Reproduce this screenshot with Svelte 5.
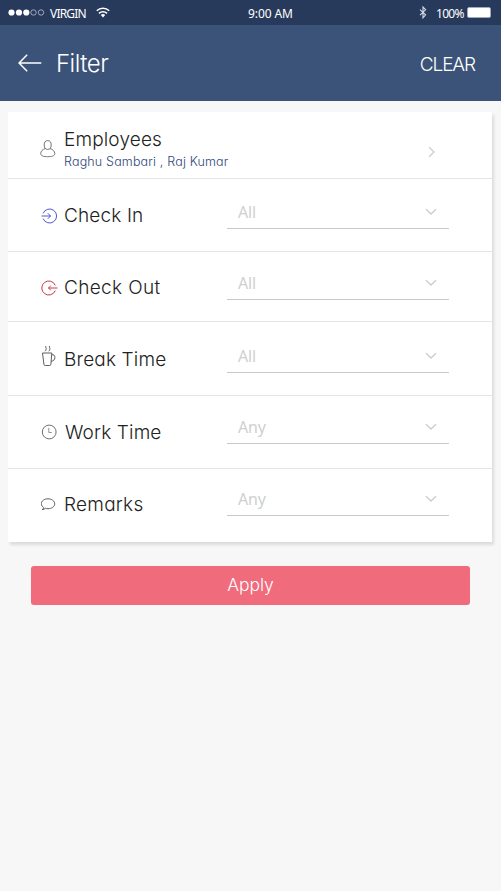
<script lang="ts">
  const filters = [
    { id: 'check-in', label: 'Check In', value: 'All' },
    { id: 'check-out', label: 'Check Out', value: 'All' },
    { id: 'break-time', label: 'Break Time', value: 'All' },
    { id: 'work-time', label: 'Work Time', value: 'Any' },
    { id: 'remarks', label: 'Remarks', value: 'Any' }
  ];
</script>

<div class="screen">
  <div class="status">
    <svg class="signal" width="37" height="9" viewBox="0 0 37 9">
      {#each [3.5, 11, 18.3] as cx}
        <circle {cx} cy="4.5" r="3.1" fill="#fff" />
      {/each}
      {#each [25.5, 33] as cx}
        <circle {cx} cy="4.5" r="2.7" fill="none" stroke="#b9c3d3" stroke-width="0.8" />
      {/each}
    </svg>
    <span class="carrier">VIRGIN</span>
    <svg class="wifi" width="14" height="11" viewBox="0 0 14 11" fill="none" stroke="#fff" stroke-width="1.6">
      <path d="M.8 3.8a8.8 8.8 0 0 1 12.4 0M3 6.4a5.7 5.7 0 0 1 8 0" />
      <path d="M4.8 8.1a3.1 3.1 0 0 1 4.4 0L7 10.5z" fill="#fff" stroke="none" />
    </svg>
    <time>9:00 AM</time>
    <svg class="bluetooth" width="8" height="13" viewBox="0 0 8 13" fill="none" stroke="#d5dce6" stroke-width="1.1">
      <path d="M1 3.6l5.6 5.2L4 11.8V1l2.6 2.8L1 9.2" />
    </svg>
    <span class="percent">100%</span>
    <span class="battery"></span>
  </div>

  <header>
    <svg width="24" height="18" viewBox="0 0 24 18" fill="none" stroke="#fff" stroke-width="1.5">
      <path d="M23.3 9H1M9.2.8 1 9l8.2 8.2" />
    </svg>
    <h1>Filter</h1>
    <button class="clear">CLEAR</button>
  </header>

  <main>
    <section class="card">
      <div class="row employees">
        <span class="icon">
          <svg width="16" height="18" viewBox="0 0 16 18" fill="none" stroke="#666" stroke-width="0.9">
            <ellipse cx="7.7" cy="5" rx="3.5" ry="4.4" />
            <path d="M5.400 8.500C2.600 9.400.7 11.200.7 13.700c0 2.100 3 3 7 3s7.100-.9 7.100-3c0-2.500-2-4.300-4.800-5.200" />
          </svg>
        </span>
        <div class="who">
          <h2>Employees</h2>
          <p>Raghu Sambari , Raj Kumar</p>
        </div>
        <svg class="next" width="8" height="12" viewBox="0 0 8 12" fill="none" stroke="#ccc" stroke-width="1.3">
          <path d="M1.200 1.200 6 6l-4.800 4.800" />
        </svg>
      </div>

      {#each filters as filter (filter.id)}
        <div class="row {filter.id}">
          <span class="icon">
            {#if filter.id === 'check-in'}
              <svg width="18" height="18" viewBox="0 0 18 18" fill="none" stroke="#4d4fc4" stroke-width="0.95">
                <path d="M2.100 6.400a7 7 0 1 1 0 5.200M.5 9h9M6.800 6.200 9.600 9l-2.800 2.800" />
              </svg>
            {:else if filter.id === 'check-out'}
              <svg width="18" height="18" viewBox="0 0 18 18" fill="none" stroke="#c8394a" stroke-width="1">
                <path d="M14.300 6.500a7 7 0 1 0 0 5M16.500 9H7.500M9.800 6.700 7.500 9l2.300 2.300" />
              </svg>
            {:else if filter.id === 'break-time'}
              <svg width="18" height="22" viewBox="0 0 18 22" fill="none" stroke="#555" stroke-width="0.95">
                <path d="M1.500 8h9.300l-.9 11.200c-.1.900-.6 1.300-1.400 1.300H4.300c-.8 0-1.300-.4-1.400-1.300zM10.700 9.700c2-.3 3.200.7 3.200 2.800 0 2.200-1.500 3.600-3.800 3.800" />
                <path d="M4.900 1c-.7 1.400.6 2 .3 3.200-.1.800-.6 1.300-1.200 2M8.600 1c-.7 1.400.6 2 .3 3.200-.1.800-.6 1.300-1.200 2" />
              </svg>
            {:else if filter.id === 'work-time'}
              <svg width="18" height="18" viewBox="0 0 18 18" fill="none" stroke="#666">
                <circle cx="8.200" cy="9" r="6.900" stroke-width="0.95" />
                <path d="M7.800 4.800v4.700h3" stroke="#888" stroke-width="0.9" />
              </svg>
            {:else}
              <svg width="18" height="18" viewBox="0 0 18 18" fill="none" stroke="#555" stroke-width="0.95">
                <path d="M2.700 12.600C1.300 11.600.3 10.300.3 8.800c0-2.900 3-5 6.700-5s6.700 2.200 6.700 5-3 4.900-6.700 4.900c-.9 0-1.800-.1-2.500-.4-.9.800-2.100 1.300-3.300 1.300.9-.5 1.500-1.200 1.500-2z" />
              </svg>
            {/if}
          </span>
          <h2>{filter.label}</h2>
          <button class="select">
            <span>{filter.value}</span>
            <svg width="12" height="8" viewBox="0 0 12 8" fill="none" stroke="#ccc" stroke-width="1.3">
              <path d="m1 1.300 5 4.700 5-4.700" />
            </svg>
          </button>
        </div>
      {/each}
    </section>

    <button class="apply">Apply</button>
  </main>
</div>

<style>
  :global(body) {
    background: #f7f7f7;
  }

  .screen {
    width: 501px;
    height: 891px;
    overflow: hidden;
    background: #f7f7f7;
    font-family: Inter, 'Open Sans', sans-serif;
    font-weight: 300;
    font-feature-settings: 'cv11';
  }

  button {
    padding: 0;
    border: 0;
    background: none;
    font: inherit;
    font-feature-settings: inherit;
    cursor: pointer;
  }

  svg {
    display: block;
    flex: none;
  }

  h1,
  h2,
  p {
    margin: 0;
    font-weight: 300;
    white-space: nowrap;
  }

  .status {
    box-sizing: border-box;
    display: flex;
    align-items: center;
    height: 25px;
    padding: 0 8px 0 8px;
    background: #283a5b;
    color: #fff;
    font: 400 12px/25px 'Noto Sans', sans-serif;
  }

  .carrier {
    width: 46px;
    margin-left: 5px;
    padding-top: 1px;
    letter-spacing: -0.8px;
  }

  time {
    width: 167px;
    margin-left: 138px;
    padding-top: 1px;
    letter-spacing: -0.1px;
  }

  .bluetooth {
    margin-left: 4px;
  }

  .percent {
    width: 31px;
    margin-left: 9px;
    padding-top: 1px;
    letter-spacing: -0.7px;
  }

  .battery {
    box-sizing: border-box;
    width: 24px;
    height: 11px;
    border: 1px solid #9fabbc;
    border-radius: 2px;
    background: #fff;
  }

  header {
    box-sizing: border-box;
    display: flex;
    align-items: center;
    height: 76px;
    padding: 0 26px 0 18px;
    background: #3b5378;
    color: #fff;
  }

  h1 {
    margin: 2px 0 0 14px;
    font-size: 24px;
    line-height: 30px;
    letter-spacing: -0.5px;
  }

  .clear {
    margin: 4px 0 0 auto;
    color: #fff;
    font-size: 19px;
    line-height: 24px;
    letter-spacing: -1.1px;
  }

  main {
    padding: 11px 9px 0 8px;
  }

  .card {
    background: #fff;
    box-shadow: 2px 3px 3px rgba(0, 0, 0, 0.11);
  }

  .row {
    box-sizing: border-box;
    display: flex;
    align-items: flex-start;
    height: 73px;
    padding: 24px 43px 0 33px;
    border-bottom: 1px solid #e5e5e5;
  }

  .row:last-child {
    border-bottom: 0;
  }

  .icon {
    display: flex;
    align-items: center;
    width: 23px;
    height: 24px;
  }

  h2 {
    color: #222;
    font-size: 19px;
    line-height: 24px;
    letter-spacing: 0.15px;
  }

  .employees {
    height: 67px;
    padding: 16px 43px 0 32px;
  }

  .employees .icon {
    width: 24px;
    margin-top: 9px;
  }

  .employees p {
    margin-top: 1px;
    color: #30477c;
    font-size: 12.5px;
    line-height: 18px;
    letter-spacing: 0.17px;
  }

  .next {
    margin: 18px 13px 0 auto;
  }

  .select {
    box-sizing: border-box;
    display: flex;
    align-items: center;
    justify-content: space-between;
    width: 222px;
    height: 30px;
    margin: -4px 0 0 auto;
    padding: 0 12px 3px 11px;
    border-bottom: 1px solid #c8c8c8;
    color: #d0d0d0;
    font-family: 'Noto Sans', sans-serif;
    font-size: 16px;
    font-weight: 400;
    line-height: 24px;
    letter-spacing: -0.2px;
  }

  .check-in {
    padding-top: 25px;
  }

  .check-in .select {
    margin-top: -5px;
  }

  .check-out {
    height: 70px;
  }

  .check-out h2 {
    letter-spacing: 0.35px;
  }

  .check-out .select {
    margin-top: -6px;
  }

  .break-time {
    height: 74px;
    padding-top: 26px;
  }

  .break-time .icon {
    margin-top: -4px;
  }

  .break-time .select {
    margin-top: -5px;
  }

  .work-time h2 {
    margin: 1px 0 0 1px;
  }

  .work-time .select {
    margin-top: -6px;
  }

  .remarks {
    padding-top: 23px;
  }

  .remarks h2 {
    margin-top: 1px;
    letter-spacing: 0.25px;
  }

  .remarks .select {
    margin-top: -6px;
  }

  .apply {
    display: block;
    width: 439px;
    height: 39px;
    margin: 24px 0 0 23px;
    padding-bottom: 3px;
    border-radius: 3px;
    background: #f06c7d;
    color: #fff;
    font-size: 17.5px;
  }
</style>
